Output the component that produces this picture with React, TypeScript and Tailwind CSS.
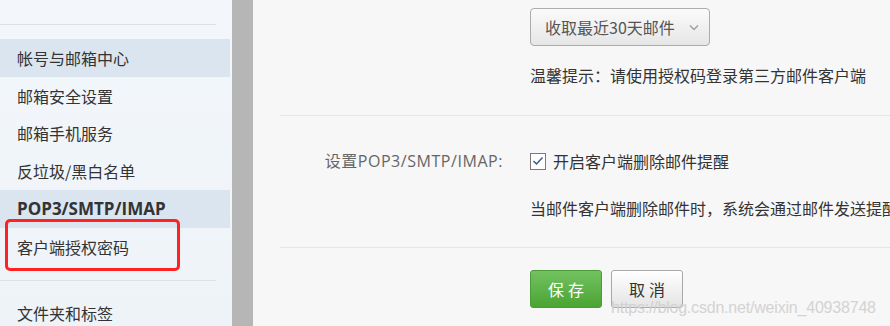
import React from "react";

const cjk = { fontFamily: '"Noto Sans CJK SC", "Noto Sans", sans-serif' };
const latin = { fontFamily: '"Open Sans", "Noto Sans CJK SC", sans-serif' };

function SideItem({ text, active, bold }: { text: string; active?: boolean; bold?: boolean }) {
  return (
    <div
      className={`h-[37.75px] shrink-0 flex items-center pl-[17px] text-[#333] mr-[2px] ${bold ? "text-[17px] font-bold" : "text-[16px]"} ${active ? "bg-[#dae5ef]" : ""}`}
      style={bold ? latin : cjk}
    >
      {text}
    </div>
  );
}

export default function App() {
  return (
    <div className="w-[890px] h-[326px] overflow-hidden flex bg-[#f7f7f7] relative" style={cjk}>
      {/* Sidebar */}
      <div className="w-[232px] shrink-0 bg-gradient-to-b from-[#f3f7fb] to-[#eef3f8] flex flex-col">
        <div className="h-[24px] shrink-0" />
        <div className="h-px shrink-0 bg-[#dde1e5] w-[216px]" />
        <div className="h-[14px] shrink-0" />
        <SideItem text="帐号与邮箱中心" active />
        <SideItem text="邮箱安全设置" />
        <SideItem text="邮箱手机服务" />
        <SideItem text="反垃圾/黑白名单" />
        <SideItem text="POP3/SMTP/IMAP" active bold />
        <div className="relative shrink-0">
          <SideItem text="客户端授权密码" />
          <div className="absolute left-[5px] top-[-9px] w-[175px] h-[52px] border-[3px] border-[#ff2222] rounded-[5px]" />
        </div>
        <div className="h-[14px] shrink-0" />
        <div className="h-px shrink-0 bg-[#dde1e5] w-[216px]" />
        <div className="h-[14px] shrink-0" />
        <SideItem text="文件夹和标签" />
      </div>
      {/* Gray strip */}
      <div className="w-[21px] shrink-0 bg-[#b6b6b6]" />
      {/* Content */}
      <div className="flex-1 pl-[27px] flex flex-col min-w-0">
        {/* Row 1 */}
        <div className="h-[115px] shrink-0 flex">
          <div className="w-[250px] shrink-0" />
          <div className="flex flex-col pt-[8px]">
            <div className="w-[180px] h-[38px] rounded-[4px] border border-[#acacac] bg-gradient-to-b from-[#fbfbfb] to-[#e6e6e6] flex items-center pl-[14px] text-[16px] text-[#555]">
              <span className="whitespace-nowrap">收取最近30天邮件</span>
              <svg className="ml-[14px]" width="10" height="7" viewBox="0 0 10 7">
                <path d="M1 1.5 L5 5.5 L9 1.5" fill="none" stroke="#9aa0a6" strokeWidth="1.4" />
              </svg>
            </div>
            <div className="mt-[17px] text-[16px] text-[#333] whitespace-nowrap leading-[24px]">
              温馨提示：请使用授权码登录第三方邮件客户端
            </div>
          </div>
        </div>
        {/* Row 2 */}
        <div className="h-[132px] shrink-0 border-t border-[#e6e6e6] flex">
          <div
            className="w-[250px] shrink-0 pr-[27px] pt-[33px] text-right text-[16px] tracking-[0.55px] text-[#666] leading-[24px] whitespace-nowrap"
            style={latin}
          >
            设置POP3/SMTP/IMAP:
          </div>
          <div className="flex flex-col pt-[33px] min-w-0">
            <div className="flex items-center h-[24px] whitespace-nowrap">
              <div className="w-[16px] h-[17px] border-[1.5px] border-[#7a7a7a] bg-white flex items-center justify-center">
                <svg width="12" height="10" viewBox="0 0 12 10">
                  <path d="M1.5 5 L4.5 8 L10.5 1.5" fill="none" stroke="#3b5a8a" strokeWidth="1.5" />
                </svg>
              </div>
              <span className="ml-[7px] text-[16px] text-[#333]">开启客户端删除邮件提醒</span>
            </div>
            <div className="mt-[23px] text-[16px] text-[#333] whitespace-nowrap leading-[24px]">
              当邮件客户端删除邮件时，系统会通过邮件发送提醒
            </div>
          </div>
        </div>
        {/* Row 3 */}
        <div className="flex-1 border-t border-[#e6e6e6] flex">
          <div className="w-[250px] shrink-0" />
          <div className="flex gap-[9px] pt-[22px]">
            <div className="w-[72px] h-[38px] rounded-[3px] border border-[#4c9b3b] bg-gradient-to-b from-[#72c260] to-[#4aa432] flex items-center justify-center text-white text-[16px] tracking-[4px] pl-[4px]">
              保存
            </div>
            <div className="w-[72px] h-[38px] rounded-[3px] border border-[#a8a8a8] bg-gradient-to-b from-[#ffffff] to-[#e4e4e4] flex items-center justify-center text-[#333] text-[16px] tracking-[4px] pl-[4px]">
              取消
            </div>
          </div>
        </div>
      </div>
      {/* Watermark */}
      <div
        className="absolute left-[611px] top-[296px] text-[16px] tracking-[-0.2px] text-[#d0d0d0] opacity-90 whitespace-nowrap"
        style={{ fontFamily: '"Liberation Sans", Arial, sans-serif' }}
      >
        https://blog.csdn.net/weixin_40938748
      </div>
    </div>
  );
}
